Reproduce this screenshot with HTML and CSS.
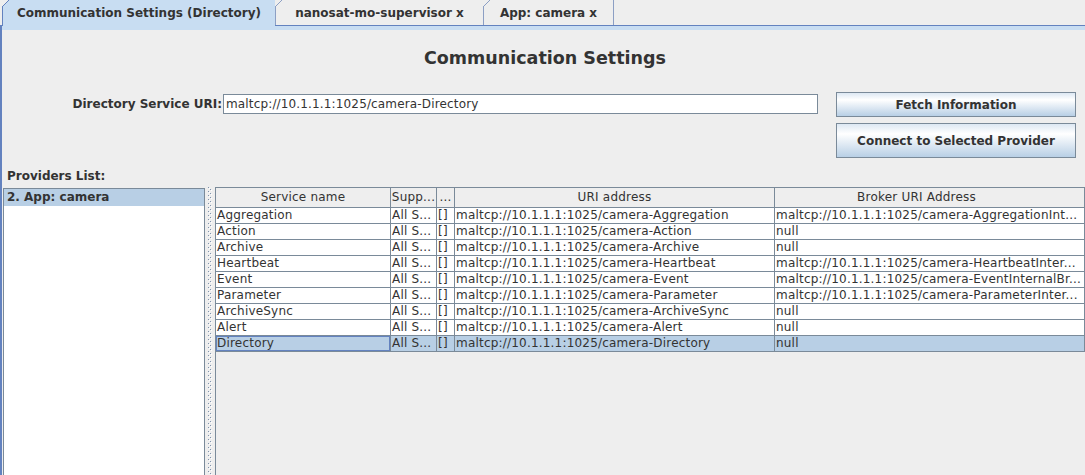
FILE: index.html
```html
<!DOCTYPE html>
<html>
<head>
    <meta charset="utf-8">
    <title>Communication Settings</title>
    <link rel="stylesheet" href="styles.css">
</head>
<body>

<div class="tabs">
    <div class="tab selected">Communication Settings (Directory)</div>
    <div class="tab tab-supervisor">nanosat-mo-supervisor x</div>
    <div class="tab tab-app">App: camera x</div>
</div>

<div class="pane">
    <h2 class="title">Communication Settings</h2>

    <div class="uri-row">
        <div class="uri-field">
            <label for="uri">Directory Service URI:</label>
            <input type="text" id="uri" value="maltcp://10.1.1.1:1025/camera-Directory">
        </div>
        <div class="actions">
            <button class="btn-fetch">Fetch Information</button>
            <button class="btn-connect">Connect to Selected Provider</button>
        </div>
    </div>

    <div class="providers-label">Providers List:</div>

    <div class="split">
        <ul class="providers">
            <li class="selected">2. App: camera</li>
        </ul>
        <div class="divider"><div class="bumps"></div></div>
        <div class="table-scroll">
            <table class="services">
                <colgroup>
                    <col class="col-name">
                    <col class="col-supp">
                    <col class="col-dots">
                    <col class="col-uri">
                    <col class="col-broker">
                </colgroup>
                <thead>
                <tr>
                    <th>Service name</th>
                    <th>Supp...</th>
                    <th>...</th>
                    <th>URI address</th>
                    <th class="th-broker">Broker URI Address</th>
                </tr>
                </thead>
                <tbody>
                <tr>
                    <td>Aggregation</td><td>All S...</td><td>[]</td>
                    <td>maltcp://10.1.1.1:1025/camera-Aggregation</td>
                    <td>maltcp://10.1.1.1:1025/camera-AggregationInt...</td>
                </tr>
                <tr>
                    <td>Action</td><td>All S...</td><td>[]</td>
                    <td>maltcp://10.1.1.1:1025/camera-Action</td>
                    <td>null</td>
                </tr>
                <tr>
                    <td>Archive</td><td>All S...</td><td>[]</td>
                    <td>maltcp://10.1.1.1:1025/camera-Archive</td>
                    <td>null</td>
                </tr>
                <tr>
                    <td>Heartbeat</td><td>All S...</td><td>[]</td>
                    <td>maltcp://10.1.1.1:1025/camera-Heartbeat</td>
                    <td>maltcp://10.1.1.1:1025/camera-HeartbeatInter...</td>
                </tr>
                <tr>
                    <td>Event</td><td>All S...</td><td>[]</td>
                    <td>maltcp://10.1.1.1:1025/camera-Event</td>
                    <td>maltcp://10.1.1.1:1025/camera-EventInternalBr...</td>
                </tr>
                <tr>
                    <td>Parameter</td><td>All S...</td><td>[]</td>
                    <td>maltcp://10.1.1.1:1025/camera-Parameter</td>
                    <td>maltcp://10.1.1.1:1025/camera-ParameterInter...</td>
                </tr>
                <tr>
                    <td>ArchiveSync</td><td>All S...</td><td>[]</td>
                    <td>maltcp://10.1.1.1:1025/camera-ArchiveSync</td>
                    <td>null</td>
                </tr>
                <tr>
                    <td>Alert</td><td>All S...</td><td>[]</td>
                    <td>maltcp://10.1.1.1:1025/camera-Alert</td>
                    <td>null</td>
                </tr>
                <tr class="selected">
                    <td class="focus">Directory</td><td>All S...</td><td>[]</td>
                    <td>maltcp://10.1.1.1:1025/camera-Directory</td>
                    <td>null</td>
                </tr>
                </tbody>
            </table>
        </div>
    </div>
</div>

</body>
</html>
```

FILE: styles.css
```css
body {
    margin: 0;
    width: 1085px;
    height: 475px;
    overflow: hidden;
    background-color: #eeeeee;
    font-family: "DejaVu Sans", "Noto Sans", sans-serif;
    font-size: 12px;
    color: #333333;
}

/* tabs */

.tabs {
    display: flex;
    height: 25px;
    padding-left: 2px;
}

.tab {
    position: relative;
    box-sizing: border-box;
    height: 25px;
    line-height: 26px;
    text-align: center;
    font-weight: bold;
    white-space: nowrap;
    background-color: #eeeeee;
    border-left: 1px solid #8c9fc4;
}

.tab::before {
    content: "";
    position: absolute;
    left: -1px;
    top: 0;
    width: 7px;
    height: 7px;
    background: linear-gradient(to bottom right, #eeeeee 0 calc(50% - 0.7px), #8c9fc4 calc(50% - 0.7px) calc(50% + 0.7px), transparent calc(50% + 0.7px));
}

.tab.selected {
    width: 273px;
    height: 26px;
    margin-bottom: -1px;
    z-index: 1;
    background-color: #c8ddf2;
    border-left-color: #6382bf;
}

.tab.selected::before {
    background: linear-gradient(to bottom right, #eeeeee 0 calc(50% - 0.7px), #6382bf calc(50% - 0.7px) calc(50% + 0.7px), transparent calc(50% + 0.7px));
}

.tab-supervisor {
    width: 208px;
}

.tab-app {
    width: 131px;
    border-right: 1px solid #8c9fc4;
}

/* content pane */

.pane {
    box-sizing: border-box;
    height: 450px;
    display: flex;
    flex-direction: column;
    border-top: 1px solid #6382bf;
    border-left: 2px solid #6382bf;
    box-shadow: inset 0 4px 0 #c8ddf2;
}

.title {
    margin: 22px 0 0 3px;
    font-size: 17.5px;
    line-height: 20px;
    text-align: center;
    font-weight: bold;
}

.uri-row {
    display: flex;
    align-items: flex-start;
    margin-top: 24px;
}

.uri-field {
    display: flex;
    align-items: center;
    margin: 2px 0 0 66px;
}

.uri-field label {
    width: 154px;
    line-height: 20px;
    text-align: right;
    font-weight: bold;
}

.uri-field input {
    box-sizing: border-box;
    width: 595px;
    height: 20px;
    margin: 0 0 0 1px;
    padding: 0 2px;
    border: 1px solid #7a8a99;
    background-color: #ffffff;
    font-family: "DejaVu Sans", sans-serif;
    font-size: 12px;
    letter-spacing: 0.15px;
    color: #333333;
    outline: none;
}

.actions {
    display: flex;
    flex-direction: column;
    gap: 6px;
    margin-left: 18px;
    width: 240px;
}

.actions button {
    box-sizing: border-box;
    width: 100%;
    padding: 0;
    border: 1px solid #7a8a99;
    background: linear-gradient(#dde8f3 0%, #ffffff 30%, #b8cfe5 100%);
    font-family: "DejaVu Sans", sans-serif;
    font-size: 12px;
    font-weight: bold;
    color: #333333;
    cursor: pointer;
}

.btn-fetch {
    height: 25px;
}

.btn-connect {
    height: 35px;
}

.providers-label {
    margin: 10px 0 0 5px;
    line-height: 16px;
    font-weight: bold;
}

/* split pane */

.split {
    flex: 1;
    display: flex;
    margin-top: 3px;
    min-height: 0;
}

.providers {
    box-sizing: border-box;
    width: 202px;
    margin: 1px 0 0 1px;
    padding: 0;
    list-style: none;
    background-color: #ffffff;
    border: 1px solid #7a8a99;
    border-bottom: none;
}

.providers li {
    height: 17px;
    line-height: 17px;
    padding-left: 3px;
    font-weight: bold;
}

.providers li.selected {
    background-color: #b8cfe5;
}

.divider {
    width: 10px;
    display: flex;
    justify-content: center;
}

.bumps {
    width: 4px;
    height: 100%;
    background-image:
        conic-gradient(from 270deg at 1px 1px, #7f93ad 90deg, transparent 0),
        conic-gradient(from 270deg at 1px 1px, #7f93ad 90deg, transparent 0),
        conic-gradient(from 270deg at 1px 1px, #ffffff 90deg, transparent 0),
        conic-gradient(from 270deg at 1px 1px, #ffffff 90deg, transparent 0);
    background-size: 4px 4px;
    background-position: 0 0, 2px 2px, 1px 1px, 3px 3px;
}

.table-scroll {
    flex: 1;
    overflow: hidden;
    background-color: #eeeeee;
    border-top: 1px solid #7a8a99;
    border-left: 1px solid #7a8a99;
}

.services {
    width: 869px;
    table-layout: fixed;
    border-collapse: separate;
    border-spacing: 0;
    font-size: 12px;
    letter-spacing: 0.2px;
    color: #333333;
}

.col-name { width: 175px; }
.col-supp { width: 46px; }
.col-dots { width: 18px; }
.col-uri { width: 320px; }
.col-broker { width: 310px; }

.services th {
    padding: 0;
    line-height: 19px;
    font-weight: normal;
    text-align: center;
    white-space: nowrap;
    overflow: hidden;
    background-color: #eeeeee;
    border-right: 1px solid #7a8a99;
    border-bottom: 1px solid #7a8a99;
}

.services th.th-broker {
    padding-right: 26px;
}

.services td {
    padding: 0 0 0 1px;
    line-height: 15px;
    white-space: nowrap;
    overflow: hidden;
    background-color: #ffffff;
    border-right: 1px solid #7a8a99;
    border-bottom: 1px solid #7a8a99;
}

.services tr.selected td {
    background-color: #b8cfe5;
}

.services td.focus {
    box-shadow: inset 0 0 0 1px #6382bf;
}
```
